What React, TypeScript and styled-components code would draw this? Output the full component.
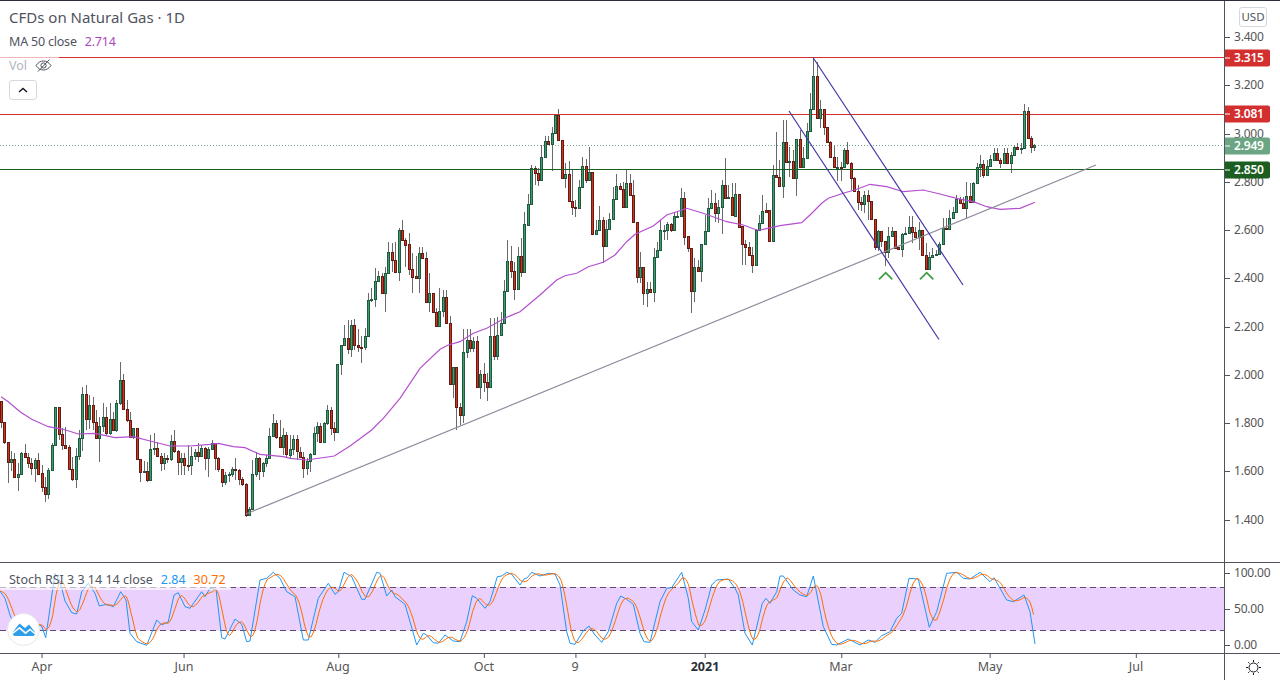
import styled, { createGlobalStyle } from "styled-components";

const GlobalStyle = createGlobalStyle`
  html, body {
    margin: 0;
    padding: 0;
    background: #ffffff;
  }
  body {
    font-family: "Noto Sans", "Liberation Sans", sans-serif;
    color: #555555;
    overflow: hidden;
  }
`;

const INK = "#50535e";
const RED = "#d32f2f";
const DARK_GREEN = "#1b5e20";
const SOFT_GREEN = "#6ba583";

// price scale, read off the axis: 3.400 sits at y=37, 241.25px per 1.000
const priceToY = (p: number) => 37 + (3.4 - p) * 241.25;
const rsiToY = (v: number) => 644.5 - v * 0.72;

type Segment = { x0: number; y0: number; rows: string };

// candles are "x colour bodyTop bodyBottom wickTop wickBottom", in 3x crop coordinates
const SEGMENTS: Segment[] = [
  {
    x0: 0,
    y0: 360,
    rows: `3 r 123 187 123 205,13 r 187 247 187 252,25 r 247 307 247 368,34 g 298 307 273 333,43 r 298 350 280 352,
    54 g 343 350 310 392,64 g 280 343 275 345,75 r 280 292 252 292,85 r 292 310 280 325,94 r 310 325 295 345,
    106 g 301 325 295 365,115 r 301 341 280 345,127 r 340 380 315 395,136 r 380 403 350 425,145 g 331 403 325 417,
    157 g 256 331 250 333,166 g 142 256 142 258,178 r 142 223 142 240,187 r 223 256 205 270,196 r 256 263 200 265,
    208 r 262 326 255 330,217 r 326 358 290 362,229 g 289 358 265 383,238 g 235 289 210 300,247 g 103 235 80 272,
    259 r 103 176 75 210,268 g 136 176 105 208,280 r 136 187 112 210,289 r 187 235 150 237,298 g 199 235 170 305,
    311 g 172 199 128 215,320 r 172 220 140 225,331 g 178 220 130 225,340 r 178 211 155 213,349 g 130 211 120 215,
    361 g 61 130 7 135,370 r 61 148 42 150,382 r 148 181 120 185,391 r 181 230 155 235,400 g 205 230 205 238,
    412 r 205 298 205 300,421 r 298 337 298 365,433 g 334 337 303 337,442 r 334 361 305 365,451 g 268 361 225 362,
    463 g 265 268 218 286,472 r 265 287 245 290,484 r 287 310 280 333,493 g 293 310 280 330,502 r 293 298 285 310,
    514 g 244 298 225 303,523 r 244 274 210 278,535 r 274 307 270 345,544 g 293 307 280 345,553 r 293 316 280 345,
    565 r 315 317 255 333,574 g 289 316 260 345,586 g 277 289 268 300,595 r 277 287 250 305,604 g 265 287 255 290,
    616 r 265 295 262 330,625 g 268 295 260 352,637 g 250 268 240 270,646 r 250 295 250 330,655 r 295 328 290 335,
    667 r 328 367 328 380,676 g 345 367 335 375,688 g 343 346 335 365,697 g 328 343 320 350,706 r 328 331 295 360,
    718 r 331 358 328 375,727 r 358 373 350 378,739 r 373 465 370 470,748 g 448 465 440 468,757 g 343 448 300 450,
    769 g 295 343 275 350,778 r 295 332 290 360,790 g 310 332 305 350,799 g 295 310 285 320,808 g 229 295 205 298,
    820 g 190 229 162 232,829 r 190 232 180 238,841 r 232 262 180 265,850 g 226 262 205 285,859 r 226 283 215 292,
    871 g 268 284 225 295,880 g 238 268 225 285,892 r 238 274 225 300`,
  },
  {
    x0: 290,
    y0: 380,
    rows: `31 r 215 230 200 232,41 r 230 265 215 293,52 g 243 265 235 285,61 g 222 243 220 275,72 g 160 222 140 225,
    82 g 138 160 125 185,91 r 138 185 130 188,103 g 130 185 125 190,113 g 90 130 75 135,124 r 90 145 80 165,
    134 r 145 157 125 182`,
  },
  {
    x0: 300,
    y0: 210,
    rows: `113 g 462 667 462 667,124 g 405 463 423 495,133 g 385 405 345 408,145 r 385 418 330 432,154 g 346 418 330 440,
    163 r 346 405 328 420,175 r 406 412 358 425,185 r 411 413 378 458,196 g 379 412 355 420,205 g 271 379 248 380,
    214 g 268 271 235 275,226 g 214 268 175 292,235 g 198 214 182 216,247 r 198 250 190 252,256 g 190 250 170 305,
    265 g 127 190 97 190,277 r 127 151 100 185,286 r 151 185 97 187,298 g 61 185 53 212,307 r 61 91 30 92,
    316 r 91 104 85 170,328 r 103 178 70 195,337 r 178 200 130 248,349 r 199 203 138 203,358 g 130 203 110 250,
    367 r 130 145 112 148,379 r 145 275 125 277,388 g 250 275 190 305,400 r 250 305 250 305,409 r 305 347 295 348,
    418 g 302 347 235 348,430 g 262 302 240 322,439 r 262 338 240 338,451 r 338 521 318 522,460 g 472 521 472 565,
    469 r 472 592 472 660,481 r 592 616 578 645,490 g 427 616 358 640,502 g 391 427 358 445,511 r 391 413 358 425,
    520 g 394 413 380 425,532 r 394 532 378 533,541 g 492 532 480 567,553 r 492 517 460 545,562 r 517 530 488 572,
    571 g 379 530 325 530,583 r 379 437 325 450,592 g 376 437 322 450,604 g 338 376 305 378,613 g 244 338 210 338,
    622 g 154 244 90 245,634 r 154 184 108 205,643 r 184 238 155 270,655 g 139 238 110 240`,
  },
  {
    x0: 520,
    y0: 100,
    rows: `3 r 468 517 415 530,14 g 373 517 335 520,25 g 313 375 283 375,34 g 205 313 195 315,46 r 205 220 198 255,
    55 r 220 241 205 258,64 g 172 241 135 242,76 g 124 172 108 172,85 r 124 133 108 135,97 g 100 133 80 212,
    106 g 45 100 45 102,115 r 45 121 28 122,127 r 121 235 120 237,136 g 223 235 190 265,148 r 223 302 183 305,
    157 r 302 322 210 345,166 r 322 325 300 350,178 g 260 325 240 325,187 g 199 260 172 260,199 r 199 241 178 248,
    208 g 217 241 140 243,217 r 217 403 215 405,229 g 389 403 360 405,238 g 361 389 318 390,250 r 361 439 350 490,
    259 g 388 439 360 442,268 g 358 388 340 390,280 g 298 358 260 360,289 g 259 298 222 300,301 r 259 268 250 270,
    310 r 268 322 245 325,319 g 250 322 208 325,331 r 250 286 222 288,340 r 286 367 240 370,352 r 367 532 365 550,
    361 g 502 532 455 550,370 r 502 580 500 615,382 g 566 580 545 620,391 r 566 577 545 578,403 g 470 577 445 605,
    412 g 449 470 425 470,421 g 391 449 360 450,433 g 389 391 375 420,442 g 373 389 365 420,454 r 373 391 370 395,
    463 g 349 391 340 393,472 g 347 350 335 350,484 g 293 347 265 348,493 r 293 410 275 435,505 r 409 445 408 455,
    514 r 445 574 445 638,523 g 502 574 475 605,535 r 502 514 480 515,544 g 433 514 433 547,556 g 394 433 345 435,
    565 g 325 394 295 395,574 g 310 325 270 325,586 r 310 338 280 365,595 g 322 338 300 370,607 g 256 322 240 403,
    616 r 256 295 175 297,625 g 290 295 255 296,637 r 290 346 250 347,646 g 283 347 250 348,658 r 283 380 283 382,
    667 r 378 431 378 495,676 r 431 440 420 495,688 r 440 466 425 468,697 r 466 494 440 518,709 g 391 494 388 495,
    718 g 370 391 345 392,727 g 333 370 285 372,739 r 331 335 310 335,748 r 331 422 330 423,760 g 226 422 195 423,
    769 r 226 230 95 232,778 r 230 257 180 258,790 g 127 257 60 293,799 r 127 187 60 188,808 g 184 187 140 230,
    820 r 184 233 150 235,829 g 118 233 118 288`,
  },
  {
    x0: 760,
    y0: 50,
    rows: `120 r 268 350 240 352,130 g 325 350 290 352,142 g 243 325 220 328,151 g 178 243 128 245,160 g 79 178 22 180,
    172 r 79 205 35 207,181 g 178 205 150 235,193 r 178 232 178 255,202 r 232 277 232 280,211 r 277 322 272 325,
    223 r 322 352 288 354,232 g 350 352 320 392,244 r 350 352 335 392,253 g 300 350 295 352,262 r 300 338 277 345,
    274 r 338 385 335 420,283 r 385 422 380 425,295 r 422 455 405 480,304 r 455 463 440 483,313 g 436 463 422 490,
    325 r 436 454 420 510,334 r 454 508 454 510,346 r 508 590 506 600,355 g 544 590 540 602,364 r 544 574 544 592,
    376 r 574 605 574 648,385 g 559 605 530 625,397 g 544 559 532 562,406 r 544 595 544 597,415 r 592 596 590 598,
    427 g 553 596 548 620,436 g 550 553 530 553,448 g 532 550 498 552,457 r 532 547 498 580,466 r 547 560 530 562,
    478 g 541 560 515 600,487 r 541 616 540 618,499 r 616 656 578 660,508 g 622 656 605 658,517 g 616 622 595 624,
    529 g 613 616 600 618,538 g 583 613 575 615,550 g 535 583 505 585,559 r 535 538 505 540,568 g 505 538 480 540,
    580 g 487 505 470 508,589 g 448 487 435 490,601 r 448 458 440 460,610 r 458 475 440 478,619 g 439 475 395 505,
    631 r 439 455 400 456,640 g 400 455 395 457,652 g 352 400 340 403,661 g 343 352 315 380,670 r 343 374 330 385,
    682 g 349 374 330 376,691 g 328 349 315 350,703 g 310 330 295 332,712 r 310 331 295 332,721 r 331 340 325 355,
    733 g 310 340 295 342,742 r 310 338 295 340,754 g 316 338 305 368,763 g 292 316 285 318,772 r 292 298 280 300,
    784 g 295 298 280 312,793 g 184 295 162 297,805 r 184 263 172 265,814 r 263 292 258 308,823 g 286 292 282 302`,
  },
];

const parseCandles = () =>
  SEGMENTS.flatMap((seg) =>
    seg.rows
      .split(",")
      .map((r) => r.trim().split(" "))
      .map(([x, c, t, b, h, l]) => ({
        x: seg.x0 + Number(x) / 3,
        up: c === "g",
        top: seg.y0 + Number(t) / 3,
        bottom: seg.y0 + Number(b) / 3,
        high: seg.y0 + Number(h) / 3,
        low: seg.y0 + Number(l) / 3,
      })),
  );

const scalePts = (pts: number[][], x0: number, y0: number) =>
  pts.map(([x, y]) => [x0 + x / 3, y0 + y / 3]);

const MA_LINE = [
  ...scalePts(
    [[3, 110], [25, 125], [60, 155], [95, 178], [145, 200], [190, 208], [235, 222], [285, 220], [345, 233], [400, 230],
     [450, 243], [510, 258], [570, 258], [630, 253], [655, 250], [700, 260], [735, 263], [780, 283], [850, 290]],
    0, 360,
  ),
  ...scalePts([[0, 235], [50, 240], [133, 228], [180, 198]], 290, 380),
  ...scalePts(
    [[215, 660], [250, 625], [300, 565], [360, 475], [420, 418], [445, 405], [480, 395], [520, 370], [560, 355], [620, 322]],
    300, 210,
  ),
  ...scalePts(
    [[0, 635], [60, 585], [110, 540], [135, 527], [170, 520], [205, 500], [250, 487], [285, 465], [320, 425], [345, 403],
     [400, 378], [440, 345], [470, 335], [500, 325], [550, 340], [620, 365], [670, 375], [710, 390]],
    520, 100,
  ),
  ...scalePts(
    [[0, 540], [60, 527], [125, 518], [150, 495], [185, 460], [205, 445], [250, 430], [290, 418], [330, 403], [380, 410],
     [430, 425], [490, 420], [540, 432], [590, 445], [640, 455], [680, 470], [720, 478], [780, 475], [825, 457]],
    760, 50,
  ),
];

const RSI_K = [
  ...scalePts(
    [[0, 78], [15, 100], [30, 150], [40, 175], [75, 178], [110, 178], [125, 183], [137, 218], [150, 130], [165, 25], [180, 50],
     [195, 108], [215, 143], [230, 147], [245, 80], [265, 55], [285, 85], [298, 123], [320, 118], [340, 125], [362, 80],
     [378, 105], [390, 205], [410, 230], [440, 241], [470, 165], [485, 180], [505, 170], [522, 90], [535, 83], [555, 125],
     [570, 130], [605, 80], [615, 95], [630, 70], [648, 73], [665, 218], [675, 222], [705, 162], [725, 178], [740, 230],
     [750, 228], [780, 45], [800, 40], [820, 22], [840, 40], [860, 80], [885, 95], [910, 225], [925, 225], [955, 100],
     [985, 55], [1005, 88], [1015, 80], [1032, 22], [1055, 35], [1085, 103], [1095, 103], [1130, 22], [1140, 25], [1160, 93],
     [1175, 75], [1185, 95], [1215, 118], [1250, 240], [1270, 205], [1280, 210], [1300, 233], [1315, 235], [1335, 210],
     [1360, 228], [1380, 230], [1400, 170], [1417, 92], [1430, 100], [1455, 130], [1470, 110], [1492, 35], [1505, 33],
     [1520, 22], [1535, 28]],
    0, 565,
  ),
  ...scalePts(
    [[0, 60], [12, 42], [22, 38], [35, 22], [60, 33], [85, 25], [105, 27], [120, 60], [140, 200], [150, 235], [165, 238],
     [190, 197], [207, 183], [225, 210], [245, 232], [265, 200], [290, 115], [302, 93], [320, 103], [340, 118], [360, 205],
     [372, 230], [390, 232], [420, 110], [440, 70], [455, 68], [485, 22], [505, 100], [515, 170], [535, 195], [555, 135],
     [575, 60], [590, 45], [625, 42], [645, 70], [655, 90], [675, 205], [697, 240], [727, 115], [738, 100], [750, 115],
     [770, 80], [780, 33], [790, 33], [820, 75], [840, 90], [860, 95], [880, 33], [910, 185], [935, 238], [950, 240],
     [985, 222], [1020, 240], [1045, 225], [1065, 232], [1085, 212], [1110, 200], [1130, 160], [1145, 145], [1167, 40],
     [1195, 42], [1228, 187], [1250, 140], [1280, 25], [1310, 22], [1330, 40], [1350, 42], [1380, 22], [1410, 50], [1422, 38],
     [1440, 70], [1460, 105], [1480, 110], [1512, 90], [1530, 140], [1545, 237]],
    520, 565,
  ),
];

const kAt = (x: number) => {
  if (x <= RSI_K[0][0]) return RSI_K[0][1];
  for (let i = 1; i < RSI_K.length; i++) {
    if (x <= RSI_K[i][0]) {
      const [x0, y0] = RSI_K[i - 1];
      const [x1, y1] = RSI_K[i];
      return y0 + ((y1 - y0) * (x - x0)) / (x1 - x0);
    }
  }
  return RSI_K[RSI_K.length - 1][1];
};

// %D is just a 3 bar average of %K
const rsiD = () => {
  const pts: number[][] = [];
  for (let x = 0; x <= 1035; x += 1.7) {
    pts.push([x, (kAt(x - 0.5) + kAt(x - 3.9) + kAt(x - 7.3)) / 3]);
  }
  return pts;
};

const toPoints = (pts: number[][]) => pts.map(([x, y]) => `${x.toFixed(1)},${y.toFixed(1)}`).join(" ");

const PRICE_TICKS = [3.4, 3.2, 3.0, 2.8, 2.6, 2.4, 2.2, 2.0, 1.8, 1.6, 1.4];
const PRICE_BADGES = [
  { value: 3.315, color: RED },
  { value: 3.081, color: RED },
  { value: 2.949, color: SOFT_GREEN },
  { value: 2.85, color: DARK_GREEN },
];
const RSI_TICKS = [100, 50, 0];
const TIME_TICKS = [
  { label: "Apr", x: 42 },
  { label: "Jun", x: 184 },
  { label: "Aug", x: 338 },
  { label: "Oct", x: 484 },
  { label: "9", x: 575 },
  { label: "2021", x: 705, strong: true },
  { label: "Mar", x: 841 },
  { label: "May", x: 990 },
  { label: "Jul", x: 1136 },
];

const Terminal = styled.div`
  width: 1280px;
  height: 680px;
  box-sizing: border-box;
  border-top: 1px solid #2a2e39;
  display: flex;
  flex-direction: column;
  overflow: hidden;
`;

const Row = styled.div<{ $height: number; $divider?: boolean }>`
  height: ${(p) => p.$height}px;
  flex: none;
  box-sizing: border-box;
  display: flex;
  border-bottom: ${(p) => (p.$divider ? `1px solid ${INK}` : "none")};
`;

const Pane = styled.div`
  position: relative;
  width: 1224px;
  flex: none;
  overflow: hidden;
`;

const PlotSvg = styled.svg`
  display: block;
  width: 1224px;
  height: 100%;
`;

const Axis = styled.div`
  position: relative;
  flex: 1;
  border-left: 1px solid ${INK};
`;

const TickMark = styled.span`
  position: absolute;
  left: 0;
  width: 5px;
  height: 1px;
  background: ${INK};
`;

const TickLabel = styled.span`
  position: absolute;
  left: 9px;
  transform: translateY(-50%);
  font-size: 12px;
  letter-spacing: -0.2px;
  line-height: 16px;
  color: #555555;
`;

const PriceBadge = styled.span<{ $color: string }>`
  position: absolute;
  left: 0;
  width: 45px;
  height: 17px;
  padding-left: 9px;
  box-sizing: border-box;
  transform: translateY(-50%);
  border-radius: 0 2px 2px 0;
  background: ${(p) => p.$color};
  color: #ffffff;
  font-size: 12px;
  font-weight: 600;
  letter-spacing: -0.2px;
  line-height: 16px;

  &::before {
    content: "";
    position: absolute;
    left: 0;
    top: 8px;
    width: 5px;
    height: 1px;
    background: #ffffff;
  }
`;

const CurrencyButton = styled.div`
  position: absolute;
  top: 6px;
  left: 14px;
  width: 28px;
  height: 20px;
  box-sizing: border-box;
  border: 1px solid #d6d8e0;
  border-radius: 3px;
  background: #ffffff;
  font-size: 11.5px;
  line-height: 18px;
  text-align: center;
  color: #50535e;
`;

const LegendStack = styled.div`
  position: absolute;
  top: 6px;
  left: 9px;
  display: flex;
  flex-direction: column;
  align-items: flex-start;
`;

const TitleRow = styled.div`
  height: 22px;
  font-size: 15px;
  line-height: 21px;
  color: #50535e;
`;

const LegendRow = styled.div`
  display: flex;
  align-items: center;
  gap: 8px;
  height: 24px;
  font-size: 12.5px;
  letter-spacing: -0.2px;
  color: #50535e;
`;

const LegendValue = styled.span<{ $color: string }>`
  color: ${(p) => p.$color};
`;

const VolRow = styled.div`
  display: flex;
  align-items: center;
  gap: 8px;
  height: 24px;
  margin-left: -9px;
  padding: 0 7px 0 9px;
  font-size: 12.5px;
  color: #b2b5be;
  background: rgba(255, 255, 255, 0.65);
`;

const CollapseButton = styled.div`
  display: flex;
  align-items: center;
  justify-content: center;
  width: 28px;
  height: 20px;
  box-sizing: border-box;
  margin-top: 3px;
  border: 1px solid #d6d8e0;
  border-radius: 3px;
  background: #ffffff;
`;

const RsiLegend = styled.div`
  position: absolute;
  top: 6px;
  left: 0;
  display: flex;
  align-items: center;
  gap: 8px;
  height: 21px;
  padding: 0 5px 0 9px;
  font-size: 12.5px;
  color: #50535e;
  background: rgba(255, 255, 255, 0.6);
`;

const LogoBadge = styled.div`
  position: absolute;
  left: 7px;
  top: 50px;
  width: 33px;
  height: 33px;
  box-sizing: border-box;
  border: 1px solid #e6e7ea;
  border-radius: 50%;
  background: #ffffff;
  display: flex;
  align-items: center;
  justify-content: center;
`;

const TimeScale = styled.div`
  position: relative;
  width: 1224px;
  flex: none;
`;

const TimeTick = styled.span<{ $strong?: boolean }>`
  position: absolute;
  top: 5px;
  transform: translateX(-50%);
  font-size: 12.5px;
  line-height: 16px;
  font-weight: ${(p) => (p.$strong ? 700 : 400)};
  color: ${(p) => (p.$strong ? "#2a2e39" : "#555555")};

  &::before {
    content: "";
    position: absolute;
    top: -5px;
    left: 50%;
    width: 1px;
    height: 4px;
    background: ${INK};
  }
`;

const SettingsCorner = styled.div`
  flex: 1;
  border-left: 1px solid ${INK};
  display: flex;
  align-items: center;
  justify-content: center;
  padding-left: 1px;
`;

function Candle({ x, up, top, bottom, high, low }: ReturnType<typeof parseCandles>[number]) {
  const left = Math.round(x - 1.5);
  const y1 = Math.round(top);
  const h = Math.max(Math.round(bottom) - y1, 1);
  return (
    <g shapeRendering="crispEdges">
      <line x1={left + 1.5} x2={left + 1.5} y1={Math.min(high, top)} y2={Math.max(low, bottom)} stroke="#6a6a6a" />
      <rect
        x={left + 0.5}
        y={y1 + 0.5}
        width={2}
        height={h}
        fill={up ? "#3f9a6d" : "#d6311f"}
        stroke={up ? "#1e5a40" : "#5f1d14"}
      />
    </g>
  );
}

function MainPlot() {
  const candles = parseCandles();
  return (
    <PlotSvg viewBox="0 1 1224 561">
      <line x1={0} x2={1224} y1={57.5} y2={57.5} stroke={RED} />
      <line x1={0} x2={1224} y1={114.5} y2={114.5} stroke={RED} />
      <line x1={0} x2={1224} y1={145.5} y2={145.5} stroke={SOFT_GREEN} strokeDasharray="1 2" />
      {candles.map((c, i) => (
        <Candle key={i} {...c} />
      ))}
      <line x1={0} x2={1224} y1={169.5} y2={169.5} stroke={DARK_GREEN} />
      <polyline points={toPoints(MA_LINE)} fill="none" stroke="#b44fcf" strokeWidth={1.2} />
      <line x1={246} y1={514} x2={1096} y2={165} stroke="#8d8a9c" strokeWidth={1.2} />
      <line x1={813} y1={57.5} x2={963} y2={285} stroke="#4339a8" strokeWidth={1.2} />
      <line x1={789} y1={111} x2={939} y2={339.5} stroke="#4339a8" strokeWidth={1.2} />
      <polyline points="879,279.3 885.7,272.7 892.3,279.3" fill="none" stroke="#3f9e45" strokeWidth={1.8} />
      <polyline points="920,279.3 926.7,272.7 933.3,279.3" fill="none" stroke="#3f9e45" strokeWidth={1.8} />
    </PlotSvg>
  );
}

function RsiPlot() {
  return (
    <PlotSvg viewBox="0 563 1224 90">
      <rect x={0} y={587} width={1224} height={43.5} fill="#e9d0fd" />
      <line x1={0} x2={1224} y1={587.5} y2={587.5} stroke="#5d4a72" strokeDasharray="6 4" />
      <line x1={0} x2={1224} y1={630.5} y2={630.5} stroke="#5d4a72" strokeDasharray="6 4" />
      <polyline points={toPoints(RSI_K)} fill="none" stroke="#2196f3" strokeWidth={1} />
      <polyline points={toPoints(rsiD())} fill="none" stroke="#ff6d00" strokeWidth={1} />
    </PlotSvg>
  );
}

function EyeOff() {
  return (
    <svg width="17" height="13" viewBox="0 0 17 13" fill="none" stroke="#50535e" strokeWidth="1">
      <path d="M1 6.5C3.2 3.4 5.6 2 8.5 2s5.3 1.4 7.5 4.5C13.8 9.6 11.4 11 8.5 11S3.2 9.6 1 6.5Z" />
      <circle cx="8.5" cy="6.5" r="2.6" />
      <path d="M3 12.5 14.5 .5" />
    </svg>
  );
}

function Logo() {
  return (
    <svg width="24" height="16" viewBox="12 622 24 16">
      <path
        d="M15.5 636a2.8 2.8 0 0 1-2.2-4.6L19.5 623.5l5.5 4.5 4-3.5 5.4 6.8a2.8 2.8 0 0 1-2.2 4.7Z"
        fill="#2e9fe6"
      />
      <path d="M12.5 633.5l7-5.6 6 5.2 4.5-3.6 5.5 4.5" fill="none" stroke="#ffffff" strokeWidth="1.6" />
    </svg>
  );
}

function SunIcon() {
  return (
    <svg width="15" height="15" viewBox="0 0 15 15" fill="none" stroke="#131722" strokeWidth="1">
      <circle cx="7.5" cy="7.5" r="4.5" />
      <path d="M7.5 0v2M7.5 13v2M0 7.5h2M13 7.5h2M2.2 2.2l1.3 1.3M11.5 11.5l1.3 1.3M2.2 12.8l1.3-1.3M11.5 3.5l1.3-1.3" />
    </svg>
  );
}

export default function App() {
  return (
    <>
      <GlobalStyle />
      <Terminal>
        <Row $height={562} $divider>
          <Pane>
            <MainPlot />
            <LegendStack>
              <TitleRow>CFDs on Natural Gas · 1D</TitleRow>
              <LegendRow>
                MA 50 close
                <LegendValue $color="#ab47bc">2.714</LegendValue>
              </LegendRow>
              <VolRow>
                Vol
                <EyeOff />
              </VolRow>
              <CollapseButton>
                <svg width="10" height="6" viewBox="0 0 10 6" fill="none" stroke="#131722" strokeWidth="1.4">
                  <path d="M1 5l4-3.6L9 5" />
                </svg>
              </CollapseButton>
            </LegendStack>
          </Pane>
          <Axis>
            <CurrencyButton>USD</CurrencyButton>
            {PRICE_TICKS.map((p) => (
              <div key={p}>
                <TickMark style={{ top: priceToY(p) - 1 }} />
                <TickLabel style={{ top: priceToY(p) - 1 }}>{p.toFixed(3)}</TickLabel>
              </div>
            ))}
            {PRICE_BADGES.map((b) => (
              <PriceBadge key={b.value} $color={b.color} style={{ top: priceToY(b.value) - 1 }}>
                {b.value.toFixed(3)}
              </PriceBadge>
            ))}
          </Axis>
        </Row>
        <Row $height={91} $divider>
          <Pane>
            <RsiPlot />
            <RsiLegend>
              Stoch RSI 3 3 14 14 close
              <LegendValue $color="#2196f3">2.84</LegendValue>
              <LegendValue $color="#ff6d00">30.72</LegendValue>
            </RsiLegend>
            <LogoBadge>
              <Logo />
            </LogoBadge>
          </Pane>
          <Axis>
            {RSI_TICKS.map((v) => (
              <div key={v}>
                <TickMark style={{ top: rsiToY(v) - 563 }} />
                <TickLabel style={{ top: rsiToY(v) - 563 }}>{v.toFixed(2)}</TickLabel>
              </div>
            ))}
          </Axis>
        </Row>
        <Row $height={26}>
          <TimeScale>
            {TIME_TICKS.map((t) => (
              <TimeTick key={t.label} $strong={t.strong} style={{ left: t.x }}>
                {t.label}
              </TimeTick>
            ))}
          </TimeScale>
          <SettingsCorner>
            <SunIcon />
          </SettingsCorner>
        </Row>
      </Terminal>
    </>
  );
}
